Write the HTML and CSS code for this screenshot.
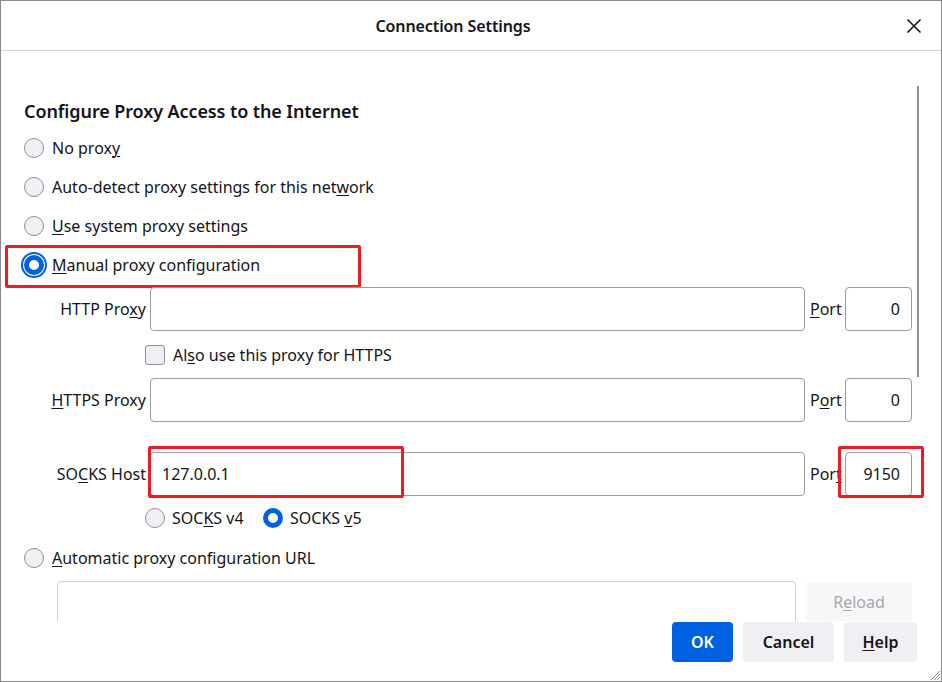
FILE: index.html
```html
<!DOCTYPE html>
<html lang="en">
<head>
<meta charset="utf-8">
<title>Connection Settings</title>
<link rel="stylesheet" href="styles.css">
</head>
<body>
<div class="window">
  <header class="titlebar">
    <div class="title">Connection Settings</div>
    <span class="close" aria-label="Close">
      <svg width="16" height="16" viewBox="0 0 16 16"><path d="M1.5 1.5 L14.5 14.5 M14.5 1.5 L1.5 14.5" stroke="#15141a" stroke-width="1.6" fill="none"/></svg>
    </span>
  </header>
  <main class="content">
    <span class="scroll-thumb"></span>
    <h1 class="heading">Configure Proxy Access to the Internet</h1>
    <div class="radio-list">
      <div class="radio-row"><span class="radio"></span><span>No prox<u>y</u></span></div>
      <div class="radio-row"><span class="radio"></span><span>Auto-detect proxy settings for this net<u>w</u>ork</span></div>
      <div class="radio-row"><span class="radio"></span><span><u>U</u>se system proxy settings</span></div>
      <div class="radio-row marked"><span class="radio checked focused"></span><span><u>M</u>anual proxy configuration</span><span class="annot annot-manual"></span></div>
    </div>

    <div class="proxy-row">
      <span class="field-label">HTTP Pro<u>x</u>y</span>
      <span class="input host"></span>
      <span class="port-label"><u>P</u>ort</span>
      <span class="input port">0</span>
    </div>
    <div class="check-row">
      <span class="checkbox"></span><span>Al<u>s</u>o use this proxy for HTTPS</span>
    </div>
    <div class="proxy-row">
      <span class="field-label"><u>H</u>TTPS Proxy</span>
      <span class="input host"></span>
      <span class="port-label">P<u>o</u>rt</span>
      <span class="input port">0</span>
    </div>
    <div class="proxy-row socks">
      <span class="field-label">SO<u>C</u>KS Host</span>
      <span class="input host filled">127.0.0.1<span class="annot annot-host"></span></span>
      <span class="port-label">Por<u>t</u></span>
      <span class="input port">9150<span class="annot annot-port"></span></span>
    </div>
    <div class="version-row">
      <span class="radio-inline v4"><span class="radio"></span><span>SOC<u>K</u>S v4</span></span>
      <span class="radio-inline"><span class="radio checked"></span><span>SOCKS <u>v</u>5</span></span>
    </div>
    <div class="radio-row auto"><span class="radio"></span><span><u>A</u>utomatic proxy configuration URL</span></div>
    <div class="url-row">
      <span class="input url disabled"></span>
      <span class="btn reload">R<u>e</u>load</span>
    </div>
  </main>
  <footer class="footer">
    <span class="btn primary ok">OK</span>
    <span class="btn cancel">Cancel</span>
    <span class="btn help"><u>H</u>elp</span>
  </footer>
  <svg class="grip" width="12" height="12" viewBox="0 0 12 12"><path d="M11 2 L2 11 M11 5 L5 11 M11 8 L8 11" stroke="#8a8a8a" stroke-width="1" fill="none"/></svg>
</div>
</body>
</html>
```

FILE: styles.css
```css
* { box-sizing: border-box; }

html, body {
  margin: 0;
  padding: 0;
  background: #ffffff;
}

body {
  font-family: "Noto Sans", "Open Sans", "DejaVu Sans", sans-serif;
  font-size: 16px;
  color: #15141a;
}

u { text-decoration: underline; text-underline-offset: 2px; text-decoration-thickness: 1px; }

.window {
  position: relative;
  width: 942px;
  height: 682px;
  border: 1px solid #8a8a8a;
  display: flex;
  flex-direction: column;
  background: #fff;
  overflow: hidden;
}

.titlebar {
  position: relative;
  height: 50px;
  flex: none;
  border-bottom: 1px solid #d4d4d8;
  display: flex;
  align-items: center;
  justify-content: center;
}

.title {
  font-weight: 600;
  font-size: 16px;
  letter-spacing: -0.1px;
  margin-right: 36px;
}

.close {
  position: absolute;
  right: 19px;
  top: 17px;
  width: 16px;
  height: 16px;
  display: block;
}
.close svg { display: block; }

.content {
  position: relative;
  flex: 1;
  overflow: hidden;
  padding: 48px 29px 0 23px;
}

.scroll-thumb {
  position: absolute;
  left: 916px;
  top: 35px;
  width: 2px;
  height: 291px;
  background: #8f8f8f;
}

.heading {
  margin: 0;
  font-size: 18px;
  font-weight: 600;
  line-height: 24px;
  letter-spacing: -0.1px;
}

.radio-list {
  margin-top: 5px;
}

.radio-row {
  position: relative;
  height: 39px;
  display: flex;
  align-items: center;
  gap: 8px;
  white-space: nowrap;
}

.radio {
  flex: none;
  width: 20px;
  height: 20px;
  border-radius: 50%;
  border: 1px solid #8f8f9d;
  background: #f0f0f4;
}

.radio.checked {
  border: 5px solid #0061e0;
  background: #fff;
}

.radio.focused {
  box-shadow: 0 0 0 1px #fff, 0 0 0 3px #0061e0;
}

.annot {
  position: absolute;
  border: 3px solid #ec1c24;
  border-radius: 2px;
  pointer-events: none;
}

.annot-manual {
  left: -19px;
  top: 0;
  width: 356px;
  height: 43px;
}

.proxy-row {
  display: flex;
  align-items: center;
  height: 44px;
  margin-top: 3px;
}

.proxy-row + .check-row + .proxy-row { margin-top: 0; }

.proxy-row.socks { margin-top: 30px; }

.field-label {
  width: 122px;
  margin-right: 4px;
  text-align: right;
  white-space: nowrap;
}

.input {
  position: relative;
  height: 44px;
  border: 1px solid #9a9aa3;
  border-radius: 4px;
  background: #fff;
  display: flex;
  align-items: center;
}

.input.host {
  flex: 1;
  padding-left: 11px;
}

.port-label {
  width: 40px;
  padding-left: 5px;
  white-space: nowrap;
}

.input.port {
  width: 67px;
  flex: none;
  justify-content: flex-end;
  padding-right: 11px;
}

.annot-host {
  left: -3px;
  top: -7px;
  width: 256px;
  height: 52px;
}

.annot-port {
  left: -8px;
  top: -7px;
  width: 86px;
  height: 52px;
}

.check-row {
  height: 47px;
  display: flex;
  align-items: center;
  gap: 8px;
  padding-left: 121px;
}

.checkbox {
  width: 20px;
  height: 20px;
  border: 1px solid #8f8f9d;
  border-radius: 3px;
  background: #f0f0f4;
}

.version-row {
  height: 44px;
  display: flex;
  align-items: center;
  padding-left: 121px;
}

.radio-inline {
  display: flex;
  align-items: center;
  gap: 8px;
  white-space: nowrap;
}

.radio-inline .radio + span { margin-left: -1px; }

.radio-inline.v4 { width: 118px; }

.radio-row.auto { height: 36px; }

.url-row {
  display: flex;
  align-items: flex-start;
  gap: 10px;
  margin-top: 5px;
  padding-left: 33px;
}

.input.url {
  flex: 1;
  border-color: #cfcfd8;
}

.btn {
  height: 40px;
  border-radius: 4px;
  display: flex;
  align-items: center;
  justify-content: center;
  font-weight: 600;
  background: #f0f0f4;
  white-space: nowrap;
}

.btn.reload {
  width: 106px;
  margin-top: 1px;
  background: #f7f7f9;
  color: #a6a6ad;
  font-weight: 400;
}

.footer {
  flex: none;
  height: 60px;
  display: flex;
  justify-content: flex-end;
  align-items: flex-start;
  gap: 10px;
  padding: 1px 24px 0 0;
}

.btn.ok { width: 61px; }
.btn.cancel { width: 91px; }
.btn.help { width: 73px; }

.btn.primary {
  background: #0061e0;
  color: #fff;
}

.grip {
  position: absolute;
  right: 0;
  bottom: 0;
}
```
